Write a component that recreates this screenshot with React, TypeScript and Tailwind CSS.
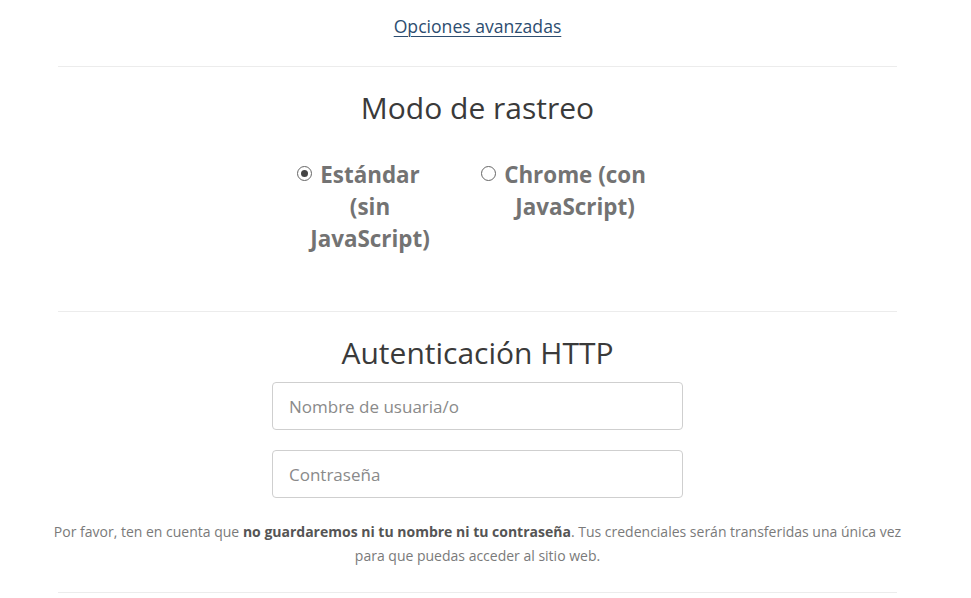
import { useState } from 'react';

function Radio({ checked }: { checked: boolean }) {
  return (
    <span className="mt-[7px] flex h-[15px] w-[15px] shrink-0 items-center justify-center rounded-full border-[1.5px] border-[#666]">
      {checked && <span className="h-[7px] w-[7px] rounded-full bg-[#444]" />}
    </span>
  );
}

export default function App() {
  const [mode, setMode] = useState<'standard' | 'chrome'>('standard');

  return (
    <div className="min-h-screen bg-white font-['Open_Sans',sans-serif]">
      <div className="ml-[58px] w-[839px]">
        <div className="pt-[14px] pb-[28px] text-center text-[17.6px] leading-[24px]">
          <a href="#" className="text-[#2d4d70] underline underline-offset-[3px] decoration-1">
            Opciones avanzadas
          </a>
        </div>

        <hr className="border-t border-[#ececec]" />

        <section className="pt-[21px] pb-[56px]">
          <h2 className="text-center text-[30px] leading-[40px] text-[#3a3a3a]">Modo de rastreo</h2>
          <div className="mt-[31px] flex justify-center gap-[49px] pr-[8px]">
            <label className="flex cursor-pointer items-start" onClick={() => setMode('standard')}>
              <Radio checked={mode === 'standard'} />
              <span className="-ml-[4px] w-[124px] text-center text-[22.4px] font-bold leading-[32px] text-[#737373]">
                Estándar (sin JavaScript)
              </span>
            </label>
            <label className="flex cursor-pointer items-start gap-[4px]" onClick={() => setMode('chrome')}>
              <Radio checked={mode === 'chrome'} />
              <span className="w-[150px] text-center text-[22.4px] font-bold leading-[32px] text-[#737373]">
                Chrome (con JavaScript)
              </span>
            </label>
          </div>
        </section>

        <hr className="border-t border-[#ececec]" />

        <section className="pt-[21px] pb-[24px]">
          <h2 className="text-center text-[30px] leading-[40px] text-[#3a3a3a]">Autenticación HTTP</h2>
          <div className="mt-[9px] ml-[214px] flex w-[411px] flex-col gap-[20px]">
            <input
              type="text"
              placeholder="Nombre de usuaria/o"
              className="h-[48px] rounded-[4px] border border-[#cfcfcf] px-[16px] text-[17px] text-[#333] placeholder:text-[#8a8a8a] outline-none"
            />
            <input
              type="password"
              placeholder="Contraseña"
              className="h-[48px] rounded-[4px] border border-[#cfcfcf] px-[16px] text-[17px] text-[#333] placeholder:text-[#8a8a8a] outline-none"
            />
          </div>
          <p className="-mx-[6px] mt-[22px] text-center text-[14px] leading-[24px] text-[#7a7a7a]">
            Por favor, ten en cuenta que{' '}
            <strong className="font-bold text-[#555]">no guardaremos ni tu nombre ni tu contraseña</strong>. Tus
            credenciales serán transferidas una única vez para que puedas acceder al sitio web.
          </p>
        </section>

        <hr className="border-t border-[#ececec]" />
      </div>
    </div>
  );
}
